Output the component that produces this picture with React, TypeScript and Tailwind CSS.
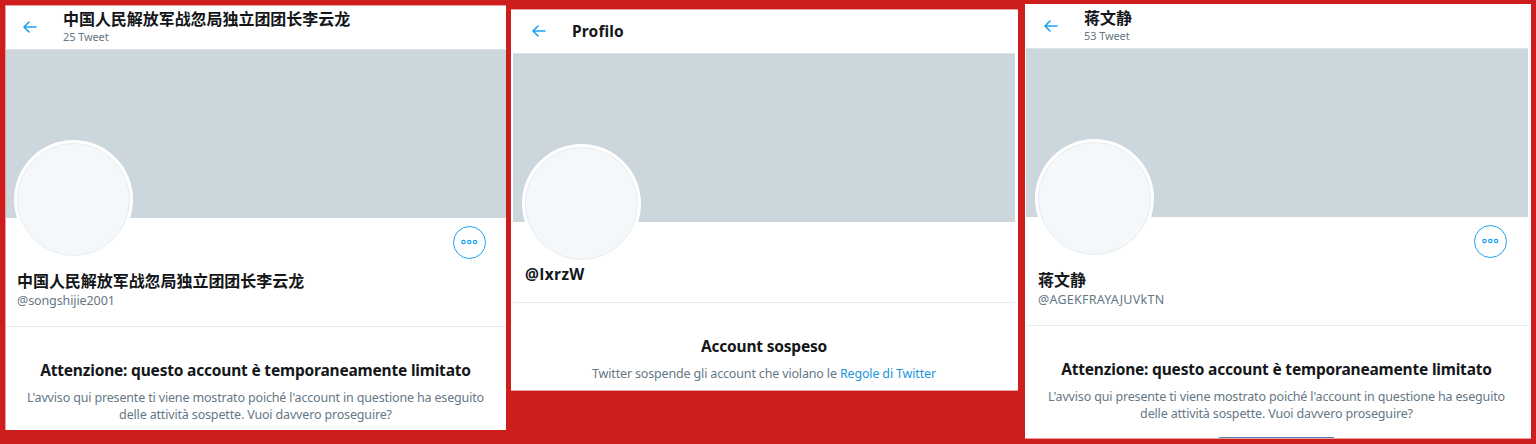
import type { ReactNode } from "react";

function BackArrow() {
  return (
    <svg viewBox="0 0 14 12" className="h-3 w-[14px] shrink-0" fill="none" stroke="#1da1f2" strokeWidth="1.6" strokeLinecap="round" strokeLinejoin="round">
      <path d="M6 1 1 6l5 5M1.2 6H13" />
    </svg>
  );
}

type HeaderProps = { title: ReactNode; count?: string; className: string; arrowClass: string; textClass: string };

function Header({ title, count, className, arrowClass, textClass }: HeaderProps) {
  return (
    <header className={"flex shrink-0 " + className}>
      <div className={"flex items-center " + arrowClass}>
        <BackArrow />
      </div>
      <div className={"ml-[26px] flex flex-col " + textClass}>
        {title}
        {count && (
          <span className="mt-[2px] text-[11px] leading-[14px] tracking-[-0.1px] text-[#657786]">{count}</span>
        )}
      </div>
    </header>
  );
}

function Cover({ className }: { className: string }) {
  return (
    <div className={"h-[169px] shrink-0 border-t border-[#dbe3e8] bg-[#ccd6dd] pt-[90px] " + className}>
      <div className="relative size-[119px] rounded-full bg-white p-[3px]">
        <div className="size-[113px] rounded-full border border-[#e6ecf0] bg-[#f5f8fa]" />
      </div>
    </div>
  );
}

function MoreButton() {
  return (
    <button className="flex size-[33px] items-center justify-center rounded-full border border-[#1da1f2]" aria-label="Altro">
      <svg viewBox="0 0 17 7" className="h-[7px] w-[17px]" fill="none" stroke="#1da1f2" strokeWidth="1.2">
        <circle cx="2.5" cy="3" r="1.7" />
        <circle cx="8.3" cy="3" r="1.7" />
        <circle cx="14.1" cy="3" r="1.7" />
      </svg>
    </button>
  );
}

const cjk = "font-['Noto_Sans_CJK_SC',sans-serif] text-[16px] leading-[20px] font-bold tracking-[-0.05px]";
const heading = "text-[15.5px] leading-[20px] font-bold tracking-[-0.19px]";
const body = "text-[12.5px] leading-[17px] tracking-[-0.16px] text-[#657786]";

type LimitedProps = {
  name: string;
  handle: string;
  count: string;
  headerClass: string;
  arrowClass: string;
  textClass: string;
  coverClass: string;
  moreClass: string;
  identityClass: string;
  handleClass: string;
};

function LimitedProfile({ name, handle, count, headerClass, arrowClass, textClass, coverClass, moreClass, identityClass, handleClass }: LimitedProps) {
  return (
    <>
      <Header title={<span className={cjk}>{name}</span>} count={count} className={headerClass} arrowClass={arrowClass} textClass={textClass} />
      <Cover className={coverClass} />
      <div className={"flex h-[50px] shrink-0 justify-end pt-2 " + moreClass}>
        <MoreButton />
      </div>
      <div className={"flex h-[59px] shrink-0 flex-col border-b border-[#e6ecf0] " + identityClass}>
        <span className={cjk + " mt-[2px]"}>{name}</span>
        <span className={"mt-[2px] text-[12.5px] leading-[18px] text-[#657786] " + handleClass}>{handle}</span>
      </div>
      <div className="flex flex-col items-center pt-[33px] pr-px whitespace-nowrap">
        <h2 className={heading}>Attenzione: questo account è temporaneamente limitato</h2>
        <p className={"mt-[9px] text-center " + body}>
          L'avviso qui presente ti viene mostrato poiché l'account in questione ha eseguito
          <br />
          delle attività sospette. Vuoi davvero proseguire?
        </p>
      </div>
    </>
  );
}

export default function App() {
  return (
    <main className="flex h-[444px] w-[1536px] items-start overflow-hidden bg-[#cd1d1d] pl-[5px] font-['Noto_Sans',sans-serif] text-[#14171a]">
      <section className="mt-[5px] flex h-[425px] w-[501px] shrink-0 flex-col overflow-hidden border-t border-l border-[#ee9b9b] bg-white">
        <LimitedProfile
          name="中国人民解放军战忽局独立团团长李云龙"
          handle="@songshijie2001"
          count="25 Tweet"
          headerClass="h-[43px] pl-[17px]"
          arrowClass="h-[42px]"
          textClass="pt-[2px]"
          coverClass="pl-2"
          moreClass="pr-5"
          identityClass="pl-[11px]"
          handleClass="tracking-[-0.1px]"
        />
      </section>

      <section className="mt-[9px] ml-[5px] flex h-[382px] w-[507px] shrink-0 flex-col overflow-hidden border-y border-[#e8a5a5] bg-white pr-[3px] pl-[2px]">
        <Header
          title={<span className="text-[15.5px] leading-[20px] font-bold tracking-[0.15px]">Profilo</span>}
          className="h-[43px] pl-[19px]"
          arrowClass="h-[42px]"
          textClass="pt-[11px]"
        />
        <Cover className="pl-[9px]" />
        <div className="h-[81px] shrink-0 border-b border-[#e6ecf0] pt-[42px] pl-3">
          <span className="block font-['Open_Sans',sans-serif] text-[15.5px] leading-[20px] font-bold tracking-[0.35px]">@IxrzW</span>
        </div>
        <div className="flex flex-col items-center pt-[33px] whitespace-nowrap">
          <h2 className={heading}>Account sospeso</h2>
          <p className={"mt-[9px] " + body}>
            Twitter sospende gli account che violano le <a className="text-[#1b95e0]">Regole di Twitter</a>
          </p>
        </div>
      </section>

      <section className="mt-[4px] ml-[7px] flex h-[435px] w-[506px] shrink-0 flex-col overflow-hidden border-b border-[#ee9b9b] bg-white pr-[3px] pl-px">
        <LimitedProfile
          name="蒋文静"
          handle="@AGEKFRAYAJUVkTN"
          count="53 Tweet"
          headerClass="h-[44px] pl-[18px]"
          arrowClass="h-[44px]"
          textClass="pt-[3px]"
          coverClass="pl-[9px]"
          moreClass="pr-[21px]"
          identityClass="pl-3"
          handleClass="tracking-[0.25px]"
        />
        <div className="ml-[191px] mt-[15px] h-[30px] w-[119px] shrink-0 rounded-sm bg-[#4a82b8]" />
      </section>
    </main>
  );
}
